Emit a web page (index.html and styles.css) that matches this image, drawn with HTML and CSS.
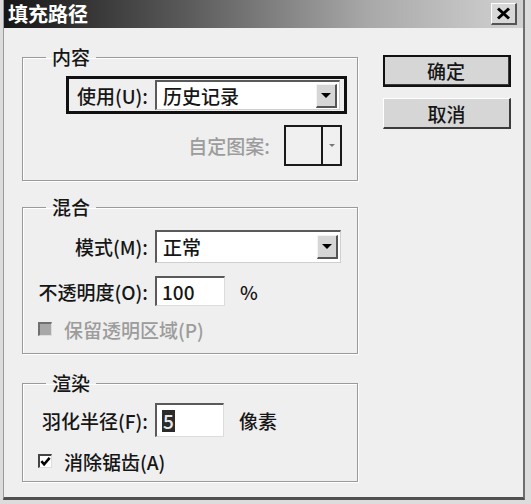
FILE: index.html
```html
<!DOCTYPE html>
<html lang="zh-CN">
<head>
    <meta charset="UTF-8">
    <title>填充路径</title>
    <link rel="stylesheet" href="styles.css">
</head>
<body>
    <div class="window">
        <div class="frame">
            <div class="titlebar">
                <span class="title">填充路径</span>
                <span class="close-btn">
                    <svg width="15" height="13" viewBox="0 0 15 13">
                        <path d="M2 1.5 L13 11.5 M13 1.5 L2 11.5" stroke="#000" stroke-width="3" fill="none"/>
                    </svg>
                </span>
            </div>

            <div class="dialog">
                <div class="groups">
                    <!-- 内容 -->
                    <fieldset class="group group-content">
                        <legend>内容</legend>
                        <div class="focus-box">
                            <span class="label label-boxed">使用(U):</span>
                            <span class="select select-use">
                                <span class="select-text">历史记录</span>
                                <span class="arrow-btn"><span class="arrow"></span></span>
                            </span>
                        </div>
                        <div class="row row-pattern">
                            <span class="label-disabled">自定图案:</span>
                            <span class="swatch">
                                <span class="swatch-box"></span>
                                <span class="swatch-arrow"><span class="arrow arrow-small"></span></span>
                            </span>
                        </div>
                    </fieldset>

                    <!-- 混合 -->
                    <fieldset class="group group-blend">
                        <legend>混合</legend>
                        <div class="row">
                            <span class="label">模式(M):</span>
                            <span class="select select-mode">
                                <span class="select-text">正常</span>
                                <span class="arrow-btn"><span class="arrow"></span></span>
                            </span>
                        </div>
                        <div class="row row-opacity">
                            <span class="label">不透明度(O):</span>
                            <span class="input input-opacity">100</span>
                            <span class="unit">%</span>
                        </div>
                        <div class="check-row check-row-disabled">
                            <span class="checkbox checkbox-disabled"></span>
                            <span class="label-disabled">保留透明区域(P)</span>
                        </div>
                    </fieldset>

                    <!-- 渲染 -->
                    <fieldset class="group group-render">
                        <legend>渲染</legend>
                        <div class="row">
                            <span class="label">羽化半径(F):</span>
                            <span class="input input-feather"><span class="selected">5</span></span>
                            <span class="unit">像素</span>
                        </div>
                        <div class="check-row check-row-aa">
                            <span class="checkbox">
                                <svg width="12" height="11" viewBox="0 0 12 11">
                                    <path d="M1.5 5 L4.5 8.5 L10.5 1.5" stroke="#000" stroke-width="2.8" fill="none"/>
                                </svg>
                            </span>
                            <span class="check-label">消除锯齿(A)</span>
                        </div>
                    </fieldset>
                </div>

                <div class="actions">
                    <button class="btn btn-default">确定</button>
                    <button class="btn">取消</button>
                </div>
            </div>
        </div>
    </div>
</body>
</html>
```

FILE: styles.css
```css
:root {
    --face-color: #efefef;
    --button-color: #d6d6d6;
    --line-color: #9a9a9a;
    --text-color: #161616;
    --disabled-color: #9c9c9c;
}

* {
    margin: 0;
    padding: 0;
    box-sizing: border-box;
}

body {
    font-family: "Noto Sans CJK SC", "Liberation Sans", sans-serif;
    font-size: 19px;
    font-weight: 500;
    color: var(--text-color);
    background-color: #dcdcdc;
}

.window {
    width: 531px;
    height: 504px;
    padding: 0 6px 4px 3px;
    background-color: #dcdcdc;
}

.frame {
    height: 100%;
    display: flex;
    flex-direction: column;
    background-color: var(--face-color);
    border-left: 1px solid #9a9a9a;
    border-right: 2px solid #6e6e6e;
    border-bottom: 3px solid #505050;
}

/* title bar */
.titlebar {
    height: 28px;
    flex: none;
    display: flex;
    align-items: center;
    justify-content: space-between;
    padding: 0 6px 0 4px;
    background: linear-gradient(to right, #161616 0%, #5a5a5a 35%, #a8a8a8 70%, #d2d2d2 100%);
}

.title {
    color: #fff;
    font-size: 20px;
    font-weight: bold;
    line-height: 28px;
}

.close-btn {
    width: 26px;
    height: 22px;
    display: flex;
    align-items: center;
    justify-content: center;
    background-color: #d8d8d8;
    border-top: 1px solid #fff;
    border-left: 1px solid #fff;
    border-right: 2px solid #555;
    border-bottom: 2px solid #555;
}

/* dialog body */
.dialog {
    flex: 1;
    display: flex;
    padding: 19px 12px 0 18px;
    gap: 25px;
}

.groups {
    width: 336px;
    display: flex;
    flex-direction: column;
}

.group {
    min-width: 0;
    border: 1px solid var(--line-color);
    box-shadow: inset 1px 1px 0 #fff, 1px 1px 0 #fff;
    display: flex;
    flex-direction: column;
}

.group legend {
    margin-left: 23px;
    padding: 0 6px;
    line-height: 20px;
}

.group-content {
    padding: 9px 0 14px;
}

.group-blend {
    margin-top: 16px;
    padding: 13px 0 14px;
    gap: 13px;
}

.group-render {
    margin-top: 19px;
    padding: 10px 0 10px;
    gap: 14px;
}

.row {
    display: flex;
    align-items: center;
}

.label {
    width: 125px;
    margin-right: 7px;
    text-align: right;
    white-space: nowrap;
}

.label-disabled {
    color: var(--disabled-color);
    white-space: nowrap;
}

/* the focused 使用 row */
.focus-box {
    align-self: flex-start;
    margin-left: 43px;
    display: flex;
    align-items: center;
    border: 3px solid #111;
    padding: 1px 4px 1px 0;
}

.label-boxed {
    width: 79px;
}

.select {
    display: flex;
    align-items: center;
    justify-content: space-between;
    background-color: #fff;
    border-top: 2px solid #5a5a5a;
    border-left: 2px solid #5a5a5a;
    border-right: 1px solid #cfcfcf;
    border-bottom: 1px solid #cfcfcf;
    padding: 1px 2px 1px 6px;
}

.select-use {
    width: 185px;
    height: 30px;
}

.select-mode {
    width: 186px;
    height: 33px;
}

.select-text {
    line-height: 24px;
}

.arrow-btn {
    width: 21px;
    height: 24px;
    display: flex;
    align-items: center;
    justify-content: center;
    background-color: var(--button-color);
    border-top: 1px solid #f4f4f4;
    border-left: 1px solid #f4f4f4;
    border-right: 2px solid #555;
    border-bottom: 2px solid #555;
}

.arrow {
    width: 0;
    height: 0;
    border-left: 5px solid transparent;
    border-right: 5px solid transparent;
    border-top: 5px solid #000;
}

.arrow-small {
    border-left-width: 3px;
    border-right-width: 3px;
    border-top: 3px solid #777;
}

.row-pattern {
    justify-content: flex-end;
    padding-right: 15px;
    margin-top: 11px;
}

.row-pattern .label-disabled {
    margin-right: 14px;
}

.swatch {
    width: 58px;
    height: 41px;
    display: flex;
    border: 2px solid #1a1a1a;
    background-color: #f0f0f0;
}

.swatch-box {
    flex: 1;
    border-right: 2px solid #1a1a1a;
}

.swatch-arrow {
    width: 17px;
    display: flex;
    align-items: center;
    justify-content: center;
}

/* text inputs */
.input {
    display: flex;
    align-items: center;
    background-color: #fff;
    border-top: 2px solid #5a5a5a;
    border-left: 2px solid #5a5a5a;
    border-right: 1px solid #dcdcdc;
    border-bottom: 1px solid #dcdcdc;
    padding-left: 5px;
}

.input-opacity {
    width: 70px;
    height: 30px;
}

.input-feather {
    width: 69px;
    height: 34px;
}

.selected {
    background-color: #2b2b2b;
    color: #e8e8e8;
    line-height: 22px;
    padding: 0 1px;
}

.unit {
    margin-left: 15px;
}

/* checkboxes */
.check-row {
    display: flex;
    align-items: center;
    height: 20px;
    padding-left: 15px;
    gap: 12px;
}

.checkbox {
    width: 14px;
    height: 14px;
    display: flex;
    align-items: center;
    justify-content: center;
    background-color: #fff;
    border-top: 2px solid #444;
    border-left: 2px solid #444;
    border-right: 1px solid #ddd;
    border-bottom: 1px solid #ddd;
}

.checkbox-disabled {
    background-color: #a8a8a8;
    border-top-color: #707070;
    border-left-color: #707070;
}

/* buttons */
.actions {
    width: 128px;
    padding-top: 8px;
    display: flex;
    flex-direction: column;
    gap: 11px;
}

.btn {
    font-family: inherit;
    font-size: 19px;
    font-weight: 500;
    color: var(--text-color);
    height: 31px;
    background-color: var(--button-color);
    border-top: 1px solid #fff;
    border-left: 1px solid #fff;
    border-right: 2px solid #3c3c3c;
    border-bottom: 2px solid #3c3c3c;
    cursor: pointer;
}

.btn-default {
    height: 32px;
    outline: 2px solid #111;
    outline-offset: -2px;
    border-right-width: 3px;
    border-bottom-width: 3px;
}
```
